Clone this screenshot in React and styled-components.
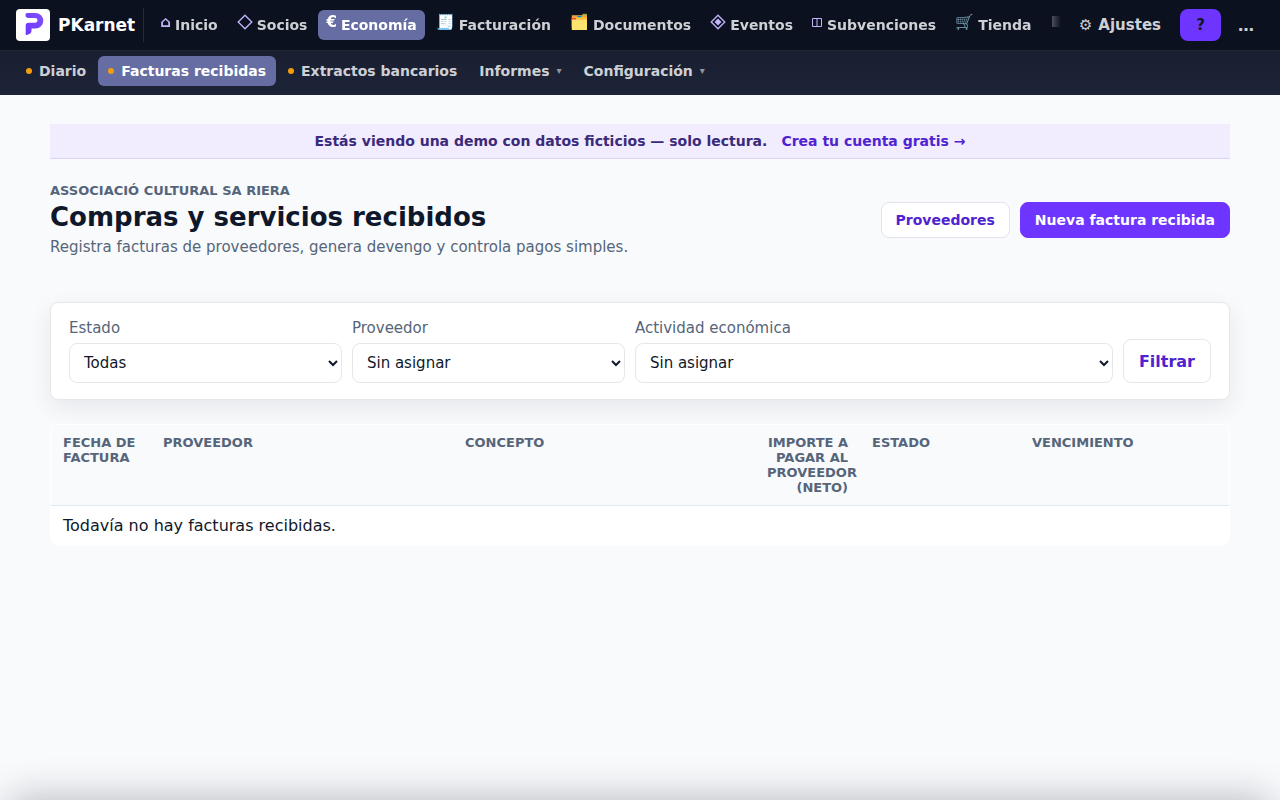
import React from 'react'
import styled, { createGlobalStyle, css } from 'styled-components'

const Diamond = () => (
  <svg width="16" height="16" viewBox="0 0 16 16" fill="none" stroke="currentColor" strokeWidth="1.300" aria-hidden="true">
    <path d="M8 1.200 14.800 8 8 14.800 1.200 8Z" />
  </svg>
)

const DiamondFilled = () => (
  <svg width="16" height="16" viewBox="0 0 16 16" fill="none" stroke="currentColor" strokeWidth="1.300" aria-hidden="true">
    <path d="M8 1.200 14.800 8 8 14.800 1.200 8Z" />
    <path d="M8 4.500 11.500 8 8 11.500 4.500 8Z" fill="currentColor" stroke="none" />
  </svg>
)

const Columns = () => (
  <svg width="11" height="16" viewBox="0 0 11 16" fill="none" stroke="currentColor" aria-hidden="true">
    <path d="M.5 4.500h9v8h-9zM5 4.500v8" />
  </svg>
)

const Square = () => (
  <svg width="16" height="16" viewBox="0 0 16 16" fill="#b9b6c8" aria-hidden="true">
    <path d="M2 2h12v11H2z" />
  </svg>
)

const mainLinks = [
  { icon: '⌂', label: 'Inicio' },
  { icon: <Diamond />, label: 'Socios' },
  { icon: '€', label: 'Economía', active: true },
  { icon: '🧾', label: 'Facturación' },
  { icon: '🗂️', label: 'Documentos' },
  { icon: <DiamondFilled />, label: 'Eventos' },
  { icon: <Columns />, label: 'Subvenciones' },
  { icon: '🛒', label: 'Tienda' },
]

const subLinks = [
  { label: 'Diario', dot: true },
  { label: 'Facturas recibidas', dot: true, active: true },
  { label: 'Extractos bancarios', dot: true },
  { label: 'Informes', menu: true },
  { label: 'Configuración', menu: true },
]

const Logo = () => (
  <svg width="34" height="32" viewBox="0 0 34 32" aria-hidden="true">
    <defs>
      <linearGradient id="logo" x1="0" y1="1" x2="1" y2="0">
        <stop offset="0" stopColor="#6d35ff" />
        <stop offset="1" stopColor="#8150fa" />
      </linearGradient>
    </defs>
    <rect width="34" height="32" rx="4" fill="#fff" />
    <path
      d="M9.500 5.500Q9.500 4 11 4H19.500A7.800 7.800 0 0 1 19.500 19.600H15.500V21.500Q15.500 24.500 12.500 25.300L11 26Q9.700 26.300 9.700 25V16.500Q9.700 13.700 12.500 13.700H19.200A2.300 2.300 0 0 0 19.200 9H12.500Q9.500 9 9.500 6Z"
      fill="url(#logo)"
    />
  </svg>
)

const App = () => {
  return (
    <>
      <GlobalStyle />
      <TopBar>
        <Brand href="#">
          <Logo />
          PKarnet
        </Brand>
        <MainNav aria-label="Principal">
          {mainLinks.map((link) => (
            <MainLink href="#" key={link.label} $active={link.active}>
              <NavIcon $active={link.active}>{link.icon}</NavIcon>
              {link.label}
            </MainLink>
          ))}
          <MainLink href="#" aria-label="Más secciones">
            <NavIcon><Square /></NavIcon>
          </MainLink>
        </MainNav>
        <Settings href="#"><span>⚙</span>Ajustes</Settings>
        <HelpButton type="button" aria-label="Ayuda">?</HelpButton>
        <MoreButton type="button" aria-label="Más">…</MoreButton>
      </TopBar>
      <SubNav aria-label="Economía">
        {subLinks.map((link) => link.menu ? (
          <SubMenu type="button" key={link.label}>
            {link.label}
            <Caret>▾</Caret>
          </SubMenu>
        ) : (
          <SubLink href="#" key={link.label} $active={link.active}>
            <Dot />
            {link.label}
          </SubLink>
        ))}
      </SubNav>

      <Page>
        <DemoBanner>
          Estás viendo una demo con datos ficticios — solo lectura.
          <a href="#">Crea tu cuenta gratis →</a>
        </DemoBanner>

        <PageHead>
          <div>
            <Eyebrow>Associació Cultural Sa Riera</Eyebrow>
            <Title>Compras y servicios recibidos</Title>
            <Lead>Registra facturas de proveedores, genera devengo y controla pagos simples.</Lead>
          </div>
          <Actions>
            <ActionLink href="#">Proveedores</ActionLink>
            <ActionLink href="#" $primary>Nueva factura recibida</ActionLink>
          </Actions>
        </PageHead>

        <Filters onSubmit={(e) => e.preventDefault()}>
          <Field>
            Estado
            <Select><option>Todas</option></Select>
          </Field>
          <Field>
            Proveedor
            <Select><option>Sin asignar</option></Select>
          </Field>
          <Field $wide>
            Actividad económica
            <Select><option>Sin asignar</option></Select>
          </Field>
          <FilterButton type="submit">Filtrar</FilterButton>
        </Filters>

        <TableCard>
          <Table>
            <thead>
              <tr>
                <Th $width="100px">Fecha de factura</Th>
                <Th>Proveedor</Th>
                <Th>Concepto</Th>
                <Th $width="105px" $right>Importe a pagar al proveedor (neto)</Th>
                <Th $width="160px">Estado</Th>
                <Th $width="209px">Vencimiento</Th>
              </tr>
            </thead>
            <tbody>
              <tr>
                <Td colSpan={6}>Todavía no hay facturas recibidas.</Td>
              </tr>
            </tbody>
          </Table>
        </TableCard>
      </Page>
      <BottomSheet />
    </>
  )
}

export default App

const GlobalStyle = createGlobalStyle`
  * {
    box-sizing: border-box;
  }
  body {
    margin: 0;
    background: #f8fafc;
    color: #0f172a;
    font-family: "DejaVu Sans", sans-serif;
    font-size: 16px;
  }
  a {
    text-decoration: none;
  }
  button, select {
    font-family: inherit;
  }
`

const TopBar = styled.header`
  display: flex;
  align-items: center;
  height: 50px;
  padding: 0 16px;
  background: #0b111e;
`

const Brand = styled.a`
  display: flex;
  align-items: center;
  gap: 8px;
  height: 34px;
  padding-right: 8px;
  border-right: 1px solid #23293a;
  color: #fff;
  font-size: 17px;
  font-weight: 700;
`

const MainNav = styled.nav`
  display: flex;
  flex: 1;
  gap: 3px;
  min-width: 0;
  margin-left: 8px;
  overflow: hidden;
  mask-image: linear-gradient(to right, #000 calc(100% - 24px), transparent);
`

const pill = css`
  display: flex;
  align-items: center;
  flex-shrink: 0;
  height: 30px;
  border: 0;
  border-radius: 6px;
  background: ${({ $active }) => ($active ? '#666da3' : 'transparent')};
  color: ${({ $active }) => ($active ? '#fff' : '#ced0d5')};
  font-size: 14px;
  font-weight: 600;
  white-space: nowrap;
`

const MainLink = styled.a`
  ${pill}
  gap: 4px;
  padding: 0 8px;
`

const NavIcon = styled.span`
  display: flex;
  padding-bottom: 6px;
  color: ${({ $active }) => ($active ? '#fff' : '#c4b5fd')};
  font-size: 15px;
  line-height: 16px;
`

const Settings = styled.a`
  display: flex;
  gap: 6px;
  padding: 0 8px;
  margin-left: 10px;
  color: #ced0d5;
  font-size: 15px;
  font-weight: 600;
`

const HelpButton = styled.button`
  width: 41px;
  height: 32px;
  margin-left: 11px;
  border: 0;
  border-radius: 8px;
  background: #6d35ff;
  color: #0f172a;
  font-size: 15px;
  font-weight: 700;
`

const MoreButton = styled.button`
  margin-left: 7px;
  padding: 0 10px;
  border: 0;
  background: none;
  color: #ced0d5;
  font-size: 16px;
  font-weight: 700;
`

const SubNav = styled.nav`
  display: flex;
  align-items: center;
  gap: 2px;
  height: 45px;
  padding: 0 16px 5px;
  border-top: 1px solid #202637;
  background: linear-gradient(#191f31, #1e2437);
`

const SubLink = styled.a`
  ${pill}
  gap: 7px;
  padding: 0 10px;
`

const SubMenu = styled.button`
  ${pill}
  gap: 7px;
  padding: 0 10px;
`

const Dot = styled.span`
  width: 6px;
  height: 6px;
  border-radius: 50%;
  background: #f59e0b;
`

const Caret = styled.span`
  color: #92969f;
  font-size: 10px;
`

const Page = styled.main`
  padding: 29px 50px;
`

const DemoBanner = styled.div`
  display: flex;
  justify-content: center;
  gap: 14px;
  padding: 9px 16px 8px;
  border-bottom: 1px solid #dcd3f8;
  background: #f1ecfe;
  color: #3b2a7a;
  font-size: 14px;
  font-weight: 600;
  line-height: 17px;

  a {
    color: #4f23d0;
  }
`

const PageHead = styled.div`
  display: flex;
  align-items: center;
  justify-content: space-between;
  margin: 24px 0 46px;
`

const Eyebrow = styled.div`
  color: #56657a;
  font-size: 13px;
  font-weight: 700;
  line-height: 15px;
  text-transform: uppercase;
`

const Title = styled.h1`
  margin: 3px 0 5px;
  font-size: 26px;
  font-weight: 700;
  line-height: 32px;
`

const Lead = styled.p`
  margin: 0;
  color: #56657a;
  font-size: 15px;
  line-height: 18px;
`

const Actions = styled.div`
  display: flex;
  gap: 10px;
`

const ActionLink = styled.a`
  padding: 9px 14px;
  border: 1px solid ${({ $primary }) => ($primary ? '#6d35ff' : '#e2e4ee')};
  border-radius: 8px;
  background: ${({ $primary }) => ($primary ? '#6d35ff' : '#fff')};
  color: ${({ $primary }) => ($primary ? '#fff' : '#4f23d0')};
  font-size: 14px;
  font-weight: 600;
  line-height: 16px;
`

const Filters = styled.form`
  display: flex;
  align-items: flex-end;
  gap: 10px;
  padding: 16px 18px;
  border: 1px solid #e5e7eb;
  border-radius: 8px;
  background: #fff;
  box-shadow: 0 8px 24px rgba(15, 15, 25, 0.08);
`

const Field = styled.label`
  display: flex;
  flex: ${({ $wide }) => ($wide ? '478 1 0' : '273 1 0')};
  flex-direction: column;
  gap: 6px;
  color: #56657a;
  font-size: 15px;
  line-height: 18px;
`

const Select = styled.select`
  height: 40px;
  padding: 0 10px;
  border: 1px solid #e5e7eb;
  border-radius: 8px;
  background: #fff;
  color: #0f172a;
  font-size: 15px;
`

const FilterButton = styled.button`
  height: 44px;
  padding: 0 15px;
  border: 1px solid #e5e7eb;
  border-radius: 8px;
  background: #fff;
  color: #4f23d0;
  font-size: 16px;
  font-weight: 700;
`

const TableCard = styled.div`
  margin-top: 24px;
  overflow: hidden;
  border: 1px solid #fff;
  border-radius: 8px;
  background: #fff;
`

const Table = styled.table`
  width: 100%;
  border-collapse: collapse;
  table-layout: fixed;
`

const Th = styled.th`
  width: ${({ $width }) => $width || 'auto'};
  padding: 10px 12px;
  border-bottom: 1px solid #e2e8f0;
  background: #f8fafc;
  color: #56657a;
  font-size: 13px;
  font-weight: 700;
  line-height: 15px;
  text-align: ${({ $right }) => ($right ? 'right' : 'left')};
  text-transform: uppercase;
  vertical-align: top;
`

const Td = styled.td`
  padding: 10px 12px;
  line-height: 19px;
`

const BottomSheet = styled.div`
  position: fixed;
  top: 100%;
  right: 10px;
  left: 10px;
  height: 80px;
  box-shadow: 0 0 40px rgba(15, 15, 30, 0.3);
`
